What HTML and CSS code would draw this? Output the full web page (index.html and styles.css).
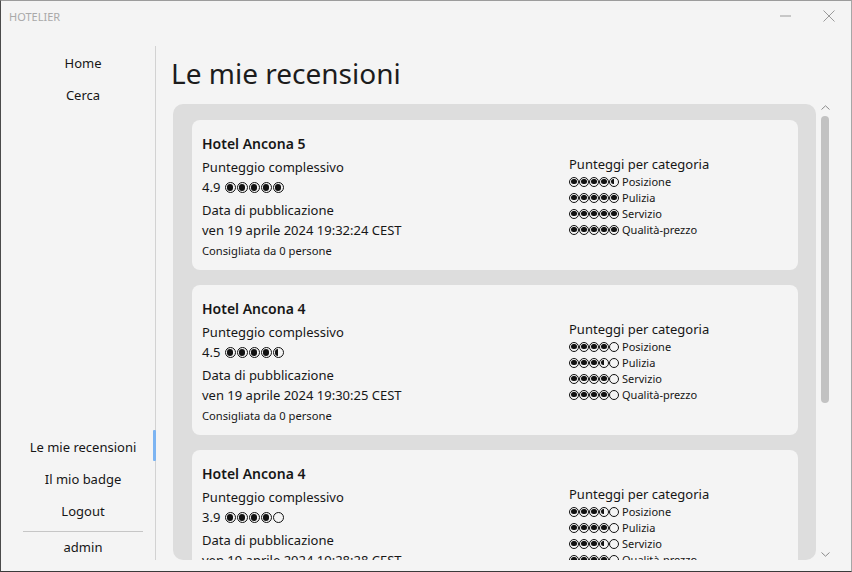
FILE: index.html
```html
<!DOCTYPE html>
<html lang="it">
<head>
<meta charset="utf-8">
<title>Hotelier</title>
<link rel="stylesheet" href="styles.css">
</head>
<body>
<div class="window">
  <div class="titlebar">
    <div class="app-title">HOTELIER</div>
    <div class="win-btn"><svg width="11" height="2" viewBox="0 0 11 2"><path d="M0 1h11" stroke="#9a9a9a" stroke-width="1"/></svg></div>
    <div class="win-btn"><svg width="12" height="12" viewBox="0 0 12 12"><path d="M0.5 0.5L11.5 11.5M11.5 0.5L0.5 11.5" stroke="#9a9a9a" stroke-width="1"/></svg></div>
  </div>
  <div class="body-row">
    <nav class="sidebar">
      <div class="nav-group">
        <div class="nav-item">Home</div>
        <div class="nav-item">Cerca</div>
      </div>
      <div class="nav-group bottom">
        <div class="nav-item active">Le mie recensioni</div>
        <div class="nav-item">Il mio badge</div>
        <div class="nav-item">Logout</div>
        <div class="separator"></div>
        <div class="nav-item user">admin</div>
      </div>
    </nav>
    <main class="main">
      <h1 class="page-title">Le mie recensioni</h1>
      <div class="scroll-pane">
        <div class="scroll-content">

          <article class="card">
            <div class="card-left">
              <div class="hotel-name">Hotel Ancona 5</div>
              <div class="group">
                <div class="line">Punteggio complessivo</div>
                <div class="line">4.9 <span class="r big"><i class="b f"></i><i class="b f"></i><i class="b f"></i><i class="b f"></i><i class="b f"></i></span></div>
              </div>
              <div class="group">
                <div class="line">Data di pubblicazione</div>
                <div class="line">ven 19 aprile 2024 19:32:24 CEST</div>
              </div>
              <div class="likes">Consigliata da 0 persone</div>
            </div>
            <div class="card-right">
              <div class="line">Punteggi per categoria</div>
              <div class="cat"><span class="r"><i class="b f"></i><i class="b f"></i><i class="b f"></i><i class="b f"></i><i class="b h"></i></span>Posizione</div>
              <div class="cat"><span class="r"><i class="b f"></i><i class="b f"></i><i class="b f"></i><i class="b f"></i><i class="b f"></i></span>Pulizia</div>
              <div class="cat"><span class="r"><i class="b f"></i><i class="b f"></i><i class="b f"></i><i class="b f"></i><i class="b f"></i></span>Servizio</div>
              <div class="cat"><span class="r"><i class="b f"></i><i class="b f"></i><i class="b f"></i><i class="b f"></i><i class="b f"></i></span>Qualità-prezzo</div>
            </div>
          </article>

          <article class="card">
            <div class="card-left">
              <div class="hotel-name">Hotel Ancona 4</div>
              <div class="group">
                <div class="line">Punteggio complessivo</div>
                <div class="line">4.5 <span class="r big"><i class="b f"></i><i class="b f"></i><i class="b f"></i><i class="b f"></i><i class="b h"></i></span></div>
              </div>
              <div class="group">
                <div class="line">Data di pubblicazione</div>
                <div class="line">ven 19 aprile 2024 19:30:25 CEST</div>
              </div>
              <div class="likes">Consigliata da 0 persone</div>
            </div>
            <div class="card-right">
              <div class="line">Punteggi per categoria</div>
              <div class="cat"><span class="r"><i class="b f"></i><i class="b f"></i><i class="b f"></i><i class="b f"></i><i class="b"></i></span>Posizione</div>
              <div class="cat"><span class="r"><i class="b f"></i><i class="b f"></i><i class="b f"></i><i class="b h"></i><i class="b"></i></span>Pulizia</div>
              <div class="cat"><span class="r"><i class="b f"></i><i class="b f"></i><i class="b f"></i><i class="b f"></i><i class="b"></i></span>Servizio</div>
              <div class="cat"><span class="r"><i class="b f"></i><i class="b f"></i><i class="b f"></i><i class="b f"></i><i class="b"></i></span>Qualità-prezzo</div>
            </div>
          </article>

          <article class="card">
            <div class="card-left">
              <div class="hotel-name">Hotel Ancona 4</div>
              <div class="group">
                <div class="line">Punteggio complessivo</div>
                <div class="line">3.9 <span class="r big"><i class="b f"></i><i class="b f"></i><i class="b f"></i><i class="b f"></i><i class="b"></i></span></div>
              </div>
              <div class="group">
                <div class="line">Data di pubblicazione</div>
                <div class="line">ven 19 aprile 2024 19:28:28 CEST</div>
              </div>
              <div class="likes">Consigliata da 0 persone</div>
            </div>
            <div class="card-right">
              <div class="line">Punteggi per categoria</div>
              <div class="cat"><span class="r"><i class="b f"></i><i class="b f"></i><i class="b f"></i><i class="b h"></i><i class="b"></i></span>Posizione</div>
              <div class="cat"><span class="r"><i class="b f"></i><i class="b f"></i><i class="b f"></i><i class="b f"></i><i class="b"></i></span>Pulizia</div>
              <div class="cat"><span class="r"><i class="b f"></i><i class="b f"></i><i class="b f"></i><i class="b h"></i><i class="b"></i></span>Servizio</div>
              <div class="cat"><span class="r"><i class="b f"></i><i class="b f"></i><i class="b f"></i><i class="b f"></i><i class="b"></i></span>Qualità-prezzo</div>
            </div>
          </article>

        </div>
        <div class="scrollbar">
          <svg class="chev" width="9" height="5" viewBox="0 0 9 5"><path d="M0.5 4.5L4.5 0.8L8.5 4.5" fill="none" stroke="#8a8a8a" stroke-width="1"/></svg>
          <div class="thumb"></div>
          <div class="spacer"></div>
          <svg class="chev down" width="9" height="5" viewBox="0 0 9 5"><path d="M0.5 0.5L4.5 4.2L8.5 0.5" fill="none" stroke="#8a8a8a" stroke-width="1"/></svg>
        </div>
      </div>
    </main>
  </div>
</div>
</body>
</html>
```

FILE: styles.css
```css
* { box-sizing: border-box; margin: 0; padding: 0; }
html, body { width: 852px; height: 572px; overflow: hidden; }
body {
  font-family: "Noto Sans", "Open Sans", sans-serif;
  color: #161616;
  background: #f4f4f4;
}
.window {
  width: 852px;
  height: 572px;
  display: flex;
  flex-direction: column;
  background: #f4f4f4;
  border-top: 1px solid #9c9c9c;
  border-left: 1px solid #4a4a4a;
  border-right: 1px solid #a6a6a6;
  border-bottom: 1px solid #3a3a3a;
  overflow: hidden;
}
.titlebar {
  height: 30px;
  display: flex;
  align-items: center;
  padding-left: 8px;
  flex-shrink: 0;
}
.app-title {
  flex: 1;
  font-size: 11px;
  color: #a9a9a9;
}
.win-btn {
  width: 44px;
  height: 30px;
  display: flex;
  align-items: center;
  justify-content: center;
}
.body-row {
  flex: 1;
  display: flex;
  padding: 15px 0 11px 0;
  min-height: 0;
}
.sidebar {
  width: 155px;
  flex-shrink: 0;
  padding: 1px 0 0 10px;
  border-right: 1px solid #d2d2d2;
  display: flex;
  flex-direction: column;
  justify-content: space-between;
}
.nav-group { display: flex; flex-direction: column; }
.nav-item {
  height: 32px;
  display: flex;
  align-items: center;
  justify-content: center;
  font-size: 13px;
  position: relative;
}
.nav-item.active::after {
  content: "";
  position: absolute;
  right: -1px;
  top: -1px;
  width: 3px;
  height: 31px;
  background: #7cb4f2;
  border-radius: 1px;
}
.separator {
  height: 1px;
  background: #c6c6c6;
  margin: 4px 12px 0 12px;
}
.nav-item.user { height: 28px; padding-top: 2px; }
.main {
  flex: 1;
  display: flex;
  flex-direction: column;
  padding: 0 17px 0 17px;
  min-width: 0;
}
.page-title {
  font-size: 28px;
  font-weight: 400;
  height: 58px;
  line-height: 55px;
  margin-left: -2px;
  color: #1c1c1c;
  flex-shrink: 0;
}
.scroll-pane {
  flex: 1;
  display: flex;
  min-height: 0;
}
.scroll-content {
  flex: 1;
  background: #dddddd;
  border-radius: 10px;
  padding: 16px 18px 0 19px;
  display: flex;
  flex-direction: column;
  gap: 15px;
  overflow: hidden;
}
.card {
  flex-shrink: 0;
  height: 150px;
  background: #f4f4f4;
  border-radius: 8px;
  padding: 14px 10px 11px 10px;
  display: flex;
  align-items: center;
  justify-content: space-between;
}
.card-left { display: flex; flex-direction: column; gap: 3px; }
.hotel-name { font-size: 14px; font-weight: 600; line-height: 20px; }
.group { display: flex; flex-direction: column; }
.line { font-size: 13px; line-height: 20px; white-space: nowrap; }
.likes { font-size: 11.2px; line-height: 16px; }
.card-right { width: 219px; display: flex; flex-direction: column; margin-bottom: 2px; }
.cat {
  font-size: 11px;
  line-height: 16px;
  display: flex;
  align-items: center;
  white-space: nowrap;
}
.r { display: inline-flex; align-items: center; margin-right: 3px; }
.r.big { margin-left: 1px; gap: 1px; vertical-align: -1px; margin-right: 0; }
.b {
  display: block;
  width: 10px;
  height: 10px;
  border: 1.4px solid #111;
  border-radius: 50%;
  position: relative;
}
.r.big .b { width: 11px; height: 11px; border-width: 1.6px; }
.b.f::after, .b.h::after {
  content: "";
  position: absolute;
  inset: 1.4px;
  border-radius: 50%;
  background: #111;
}
.b.h::after { background: linear-gradient(to right, #111 50%, transparent 50%); }
.scrollbar {
  width: 18px;
  flex-shrink: 0;
  display: flex;
  flex-direction: column;
  align-items: center;
}
.chev { margin-top: 1px; display: block; }
.thumb {
  width: 8px;
  height: 287px;
  margin-top: 6px;
  background: #c2c2c2;
  border-radius: 4px;
}
.spacer { flex: 1; }
.chev.down { margin-bottom: 3px; }
```
